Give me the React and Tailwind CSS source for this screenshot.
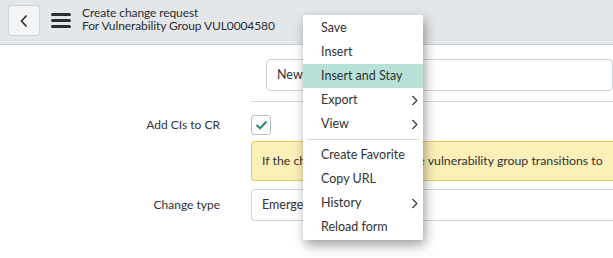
import React from "react";

const menu = [
  { label: "Save" },
  { label: "Insert" },
  { label: "Insert and Stay", active: true },
  { label: "Export", sub: true },
  { label: "View", sub: true },
  { sep: true },
  { label: "Create Favorite" },
  { label: "Copy URL" },
  { label: "History", sub: true },
  { label: "Reload form" },
];

function Chevron({ className }) {
  return (
    <svg width="7" height="11" viewBox="0 0 7 11" className={className}>
      <path d="M1.5 1 L5.8 5.5 L1.5 10" fill="none" stroke="#3b3f42" strokeWidth="1.3" />
    </svg>
  );
}

function ContextMenu() {
  return (
    <div className="absolute left-[303px] top-[15px] w-[120px] bg-white rounded-[2px] py-px shadow-[2px_5px_12px_rgba(0,0,0,0.38)] text-[12.5px] text-[#2f3236]">
      {menu.map((m, i) =>
        m.sep ? (
          <div key={i} className="mx-[4px] my-[3px] h-px bg-[#d6d8da]" />
        ) : (
          <div
            key={i}
            className={`h-6 flex items-center justify-between pl-[18px] pr-[5px] ${
              m.active ? "bg-[#b8e1d7]" : ""
            }`}
          >
            <span>{m.label}</span>
            {m.sub && <Chevron />}
          </div>
        )
      )}
    </div>
  );
}

export default function App() {
  return (
    <div
      className="relative w-[613px] h-[258px] overflow-hidden bg-white text-[#2f3236]"
      style={{ fontFamily: "Lato, 'Open Sans', sans-serif" }}
    >
      <div className="h-[45px] bg-[#e4e7ea] border-b border-[#c9ccd0] flex items-start">
        <button className="mt-[5px] ml-[8px] w-[32px] h-[31px] rounded-[3px] border border-[#cfd3d6] bg-[#f3f4f5] flex items-center justify-center">
          <svg width="10" height="14" viewBox="0 0 10 14">
            <path d="M7.5 1.5 L2.5 7 L7.5 12.5" fill="none" stroke="#2b2e31" strokeWidth="1.6" />
          </svg>
        </button>
        <div className="ml-[11px] mt-[13px] flex flex-col gap-[3px]">
          <div className="w-[20px] h-[3px] bg-[#2b2e31] rounded-sm" />
          <div className="w-[20px] h-[3px] bg-[#2b2e31] rounded-sm" />
          <div className="w-[20px] h-[3px] bg-[#2b2e31] rounded-sm" />
        </div>
        <div className="ml-[11px] mt-[6px] text-[12px] leading-[13px] tracking-[-0.1px] text-[#2b2e31]">
          <div>Create change request</div>
          <div>For Vulnerability Group VUL0004580</div>
        </div>
      </div>

      <div className="flex flex-col">
        <div className="ml-[251px] pt-[14px] pb-[10px] border-b border-[#d3d5d8]">
          <div className="ml-[15px] h-[32px] rounded-[4px] border border-[#cfd2d5] flex items-center px-[10px] text-[12.5px]">
            New
          </div>
        </div>

        <div className="flex items-center mt-[13px] h-[20px]">
          <div className="w-[220px] text-right text-[12px]">Add CIs to CR</div>
          <div className="ml-[31px] w-[20px] h-[20px] rounded-[3px] border border-[#b9bdc1] bg-white flex items-center justify-center">
            <svg width="13" height="10" viewBox="0 0 13 10">
              <path d="M1.5 5 L5 8.3 L11.5 1.5" fill="none" stroke="#2b8a75" strokeWidth="2" />
            </svg>
          </div>
        </div>

        <div className="ml-[251px] mt-[6px] h-[40px] rounded-l-[4px] border border-r-0 border-[#e3d05a] bg-[#fcf0b9] flex items-center pl-[10px] text-[12.3px] whitespace-nowrap overflow-hidden">
          If the change is closed and the vulnerability group transitions to
        </div>

        <div className="flex items-center mt-[8px]">
          <div className="w-[220px] text-right text-[12px]">Change type</div>
          <div className="ml-[31px] flex-1 h-[32px] rounded-l-[4px] border border-r-0 border-[#cfd2d5] flex items-center pl-[10px] text-[12.5px]">
            Emergency
          </div>
        </div>
      </div>

      <ContextMenu />
    </div>
  );
}
